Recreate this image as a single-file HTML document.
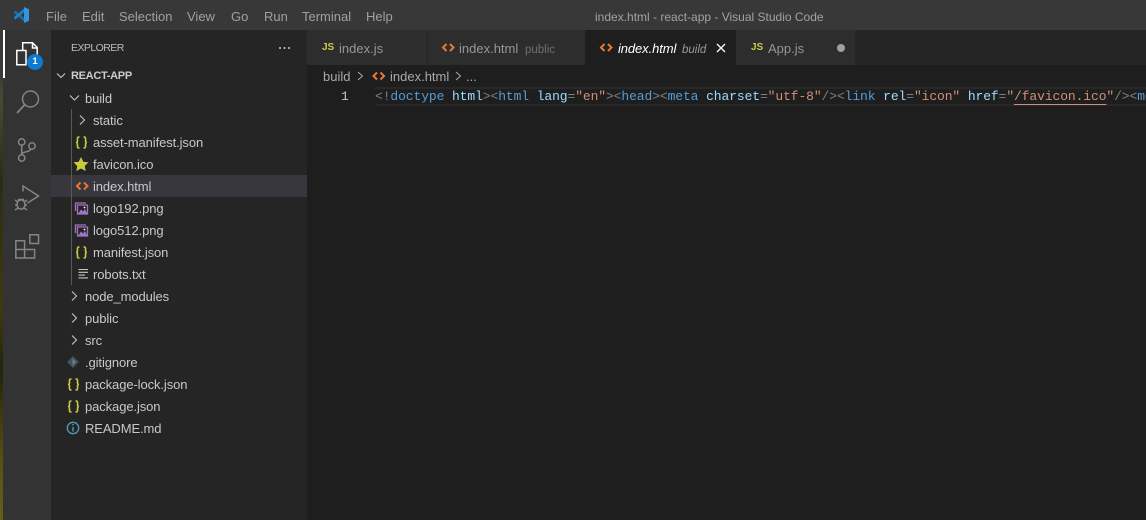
<!DOCTYPE html>
<html><head><meta charset="utf-8"><style>
html,body{margin:0;padding:0;width:1146px;height:520px;overflow:hidden;background:#1e1e1e}
*{box-sizing:border-box}
.a{position:absolute}
.t{position:absolute;margin-top:1px;white-space:pre;font-family:"Liberation Sans",sans-serif;font-size:13px;line-height:22px;height:22px;color:#cccccc}
.m{color:#a0a0a0;top:5px}
.f{color:#c8c8c8;letter-spacing:-.1px}
svg{position:absolute;overflow:visible}
.code{position:absolute;left:375px;top:88px;white-space:pre;font-family:"Liberation Mono",monospace;font-size:13px;letter-spacing:-.105px;line-height:18px;color:#808080}
.b{color:#569cd6}.n{color:#9cdcfe}.s{color:#ce9178}.g{color:#808080}
</style></head><body>
<div class="a" style="left:0;top:0;width:1146px;height:30px;background:#383838"></div>
<div class="a" style="left:0;top:30px;width:3px;height:490px;background:linear-gradient(180deg,#3a3a3a 0,#3a3a3a 45px,#4a4a30 70px,#2c2c10 150px,#3d3a10 280px,#242408 340px,#5a5514 440px,#6a6418 520px)"></div>
<div class="a" style="left:3px;top:30px;width:48px;height:490px;background:#333333"></div>
<div class="a" style="left:3px;top:30px;width:2px;height:48px;background:#ffffff"></div>
<div class="a" style="left:51px;top:30px;width:256px;height:490px;background:#252526"></div>
<div class="a" style="left:307px;top:30px;width:839px;height:35px;background:#252526"></div>

<!-- logo -->
<svg style="left:0;top:0" width="40" height="30" viewBox="0 0 40 30" fill="none">
<path d="M14.500 11.500 25 20.500" stroke="#1b6fb0" stroke-width="2.600"/>
<path d="M14.500 18.500 25 9.500" stroke="#2083c9" stroke-width="2.600"/>
<path d="M24 7 29 9.300V20.700L24 23Z" fill="#2f97e0"/>
</svg>

<div class="t m" style="left:46px">File</div>
<div class="t m" style="left:82px">Edit</div>
<div class="t m" style="left:119px">Selection</div>
<div class="t m" style="left:187px">View</div>
<div class="t m" style="left:231px">Go</div>
<div class="t m" style="left:264px">Run</div>
<div class="t m" style="left:302px">Terminal</div>
<div class="t m" style="left:366px">Help</div>
<div class="t" style="left:595px;top:5px;color:#a2a2a2;font-size:12px">index.html - react-app - Visual Studio Code</div>

<!-- activity icons -->
<svg style="left:0;top:0" width="51" height="280" viewBox="0 0 51 280" fill="none">
<g stroke="#ffffff" stroke-width="1.5">
<path d="M22.700 50V42.800H32.500L37.200 47.500V60H30"/>
<path d="M32.500 43V48H37"/>
<path d="M16.800 50.500H26V64.800H16.800Z"/>
</g>
<circle cx="35" cy="62" r="8" fill="#0e7ad0"/>
<g stroke="#858585" stroke-width="1.5">
<circle cx="30.500" cy="99" r="8"/>
<path d="M24.500 105 17 113" stroke-width="1.700"/>
<circle cx="21.700" cy="142" r="3.200"/><circle cx="32" cy="146" r="3.200"/><circle cx="21.700" cy="158" r="3.200"/>
<path d="M21.700 145.500V154.500M21.800 154C23 151 29 153 31 149"/>
<path d="M23 191.500V186L38.500 196 27.500 203"/>
<ellipse cx="21" cy="204.500" rx="4" ry="4.600"/>
<path d="M15 200 18 202M27 200 24 202M15 205H17M27 205H25M15 210 18 208M27 210 24 208M18 199.500H24"/>
<path d="M15.800 240.800H24.600V258H15.800ZM15.800 249.500H34.600V258H24.600"/>
<path d="M29.800 234.800H38.500V243.500H29.800Z"/>
</g>
</svg>
<div class="t" style="left:30px;top:50px;width:10px;text-align:center;font-size:9.500px;font-weight:bold;color:#fff">1</div>

<!-- explorer header -->
<div class="t" style="left:71px;top:36px;font-size:10.500px;letter-spacing:-.55px;color:#bbbbbb">EXPLORER</div>
<svg style="left:278px;top:46px" width="14" height="4"><circle cx="2" cy="2" r="1" fill="#ccc"/><circle cx="6.500" cy="2" r="1" fill="#ccc"/><circle cx="11" cy="2" r="1" fill="#ccc"/></svg>

<div class="a" style="left:51px;top:175px;width:256px;height:22px;background:#37373d"></div>
<div class="a" style="left:71px;top:109px;width:1px;height:176px;background:#585858"></div>

<!-- tree -->
<div class="t" style="left:71px;top:64px;font-size:11px;font-weight:bold;letter-spacing:-.3px;color:#cccccc">REACT-APP</div>
<div class="t f" style="left:85px;top:87px">build</div>
<div class="t f" style="left:93px;top:109px">static</div>
<div class="t f" style="left:93px;top:131px">asset-manifest.json</div>
<div class="t f" style="left:93px;top:153px">favicon.ico</div>
<div class="t f" style="left:93px;top:175px">index.html</div>
<div class="t f" style="left:93px;top:197px">logo192.png</div>
<div class="t f" style="left:93px;top:219px">logo512.png</div>
<div class="t f" style="left:93px;top:241px">manifest.json</div>
<div class="t f" style="left:93px;top:263px">robots.txt</div>
<div class="t f" style="left:85px;top:285px">node_modules</div>
<div class="t f" style="left:85px;top:307px">public</div>
<div class="t f" style="left:85px;top:329px">src</div>
<div class="t f" style="left:85px;top:351px">.gitignore</div>
<div class="t f" style="left:85px;top:373px">package-lock.json</div>
<div class="t f" style="left:85px;top:395px">package.json</div>
<div class="t f" style="left:85px;top:417px">README.md</div>

<svg style="left:0;top:0" width="120" height="440" viewBox="0 0 120 440" fill="none">
<g stroke="#c5c5c5" stroke-width="1.100">
<path d="M57 73.500 61 77.500 65 73.500"/>
<path d="M70 95.500 74.500 100 79 95.500"/>
<path d="M80 115.500 84.500 120 80 124.500"/>
<path d="M72 291.500 76.500 296 72 300.500"/>
<path d="M72 313.500 76.500 318 72 322.500"/>
<path d="M72 335.500 76.500 340 72 344.500"/>
</g>
<g stroke="#cbcb41" stroke-width="1.600">
<path d="M79.500 137H78.500C77 137 77.500 140.500 77.500 141C77.500 142 76.500 142.500 76 142.500C76.500 142.500 77.500 143 77.500 144C77.500 144.500 77 148 78.500 148H79.500M83.500 137H84.500C86 137 85.500 140.500 85.500 141C85.500 142 86.500 142.500 87 142.500C86.500 142.500 85.500 143 85.500 144C85.500 144.500 86 148 84.500 148H83.500"/>
<path d="M79.500 247H78.500C77 247 77.500 250.500 77.500 251C77.500 252 76.500 252.500 76 252.500C76.500 252.500 77.500 253 77.500 254C77.500 254.500 77 258 78.500 258H79.500M83.500 247H84.500C86 247 85.500 250.500 85.500 251C85.500 252 86.500 252.500 87 252.500C86.500 252.500 85.500 253 85.500 254C85.500 254.500 86 258 84.500 258H83.500"/>
<path d="M71.500 379H70.500C69 379 69.500 382.500 69.500 383C69.500 384 68.500 384.500 68 384.500C68.500 384.500 69.500 385 69.500 386C69.500 386.500 69 390 70.500 390H71.500M75.500 379H76.500C78 379 77.500 382.500 77.500 383C77.500 384 78.500 384.500 79 384.500C78.500 384.500 77.500 385 77.500 386C77.500 386.500 78 390 76.500 390H75.500"/>
<path d="M71.500 401H70.500C69 401 69.500 404.500 69.500 405C69.500 406 68.500 406.500 68 406.500C68.500 406.500 69.500 407 69.500 408C69.500 408.500 69 412 70.500 412H71.500M75.500 401H76.500C78 401 77.500 404.500 77.500 405C77.500 406 78.500 406.500 79 406.500C78.500 406.500 77.500 407 77.500 408C77.500 408.500 78 412 76.500 412H75.500"/>
</g>
<path d="M80.500 182.500 77 186 80.500 189.500M84 182.500 87.500 186 84 189.500" stroke="#e37933" stroke-width="2"/>
<path d="M81 157 83.300 161.800 88.500 162.400 84.700 166 85.700 171 81 168.500 76.300 171 77.300 166 73.500 162.400 78.700 161.800Z" fill="#cbcb41"/>
<g stroke="#a074c4" stroke-width="1.300">
<path d="M75.500 211V203H86"/>
<path d="M77.500 205H87.500V214H77.500Z"/>
<path d="M75.500 233V225H86"/>
<path d="M77.500 227H87.500V236H77.500Z"/>
</g>
<path d="M78 214 81 209.500 83 211.500 85 209 87.500 214Z" fill="#a074c4"/>
<path d="M78 236 81 231.500 83 233.500 85 231 87.500 236Z" fill="#a074c4"/>
<circle cx="84.500" cy="207.500" r=".9" fill="#fff"/><circle cx="84.500" cy="229.500" r=".9" fill="#fff"/>
<path d="M78.500 270H88M78.500 272.800H88M78.500 275.600H85M78.500 278.400H88" stroke="#c5c5c5" stroke-width="1.100" transform="translate(0,-.5)"/>
<path d="M73 356 79 362 73 368 67 362Z" fill="#41535b"/>
<path d="M72.500 358.500 76 362 72.500 365.500" fill="#6d8086"/>
<circle cx="73" cy="428" r="5.700" stroke="#519aba" stroke-width="1.300"/>
<path d="M73 427V431.500M73 424V425.500" stroke="#519aba" stroke-width="1.400"/>
</svg>

<!-- tabs -->
<div class="a" style="left:307px;top:30px;width:120px;height:35px;background:#2d2d2d"></div>
<div class="a" style="left:427px;top:30px;width:158px;height:35px;background:#2d2d2d;border-left:1px solid #252526"></div>
<div class="a" style="left:585px;top:30px;width:151px;height:35px;background:#1e1e1e"></div>
<div class="a" style="left:736px;top:30px;width:119px;height:35px;background:#2d2d2d"></div>

<div class="t" style="left:322px;top:36px;font-size:10px;font-weight:bold;color:#cbcb41;width:14px">JS</div>
<div class="t" style="left:339px;top:37px;color:#969696">index.js</div>
<div class="t" style="left:459px;top:37px;color:#969696">index.html</div>
<div class="t" style="left:525px;top:38px;font-size:11.500px;color:#6f6f6f">public</div>
<div class="t" style="left:618px;top:37px;color:#ffffff;font-style:italic;letter-spacing:-.1px">index.html</div>
<div class="t" style="left:682px;top:38px;font-size:11.500px;font-style:italic;color:#9a9a9a">build</div>
<div class="t" style="left:751px;top:36px;font-size:10px;font-weight:bold;color:#cbcb41;width:14px">JS</div>
<div class="t" style="left:768px;top:37px;color:#969696">App.js</div>

<svg style="left:0;top:0" width="860" height="90" viewBox="0 0 860 90" fill="none">
<g stroke="#e37933" stroke-width="2">
<path d="M446.500 44 443 47.500 446.500 51M450 44 453.500 47.500 450 51"/>
<path d="M604.500 44 601 47.500 604.500 51M608 44 611.500 47.500 608 51"/>
<path d="M377 72.500 373.500 76 377 79.500M380.500 72.500 384 76 380.500 79.500"/>
</g>
<path d="M717 44 725 52M725 44 717 52" stroke="#ffffff" stroke-width="1.300"/>
<circle cx="841" cy="48" r="4" fill="#a0a0a0"/>
<path d="M358 72 362.500 76 358 80M456 72 460.500 76 456 80" stroke="#a8a8a8" stroke-width="1"/>
</svg>

<!-- breadcrumb -->
<div class="t" style="left:323px;top:65px;color:#a9a9a9">build</div>
<div class="t" style="left:390px;top:65px;color:#a9a9a9">index.html</div>
<div class="t" style="left:466px;top:65px;color:#a9a9a9">...</div>

<!-- editor -->
<div class="a" style="left:375px;top:87px;width:771px;height:19px;border-top:2px solid #282828;border-bottom:2px solid #282828"></div>
<div class="t" style="left:341px;top:88px;margin-top:0;height:18px;line-height:18px;font-family:'Liberation Mono',monospace;font-size:13px;color:#c6c6c6">1</div>
<div class="code"><span class="g">&lt;!</span><span class="b">doctype</span> <span class="n">html</span><span class="g">&gt;&lt;</span><span class="b">html</span> <span class="n">lang</span>=<span class="s">"en"</span><span class="g">&gt;&lt;</span><span class="b">head</span><span class="g">&gt;&lt;</span><span class="b">meta</span> <span class="n">charset</span>=<span class="s">"utf-8"</span><span class="g">/&gt;&lt;</span><span class="b">link</span> <span class="n">rel</span>=<span class="s">"icon"</span> <span class="n">href</span>=<span class="s">"<span style="text-decoration:underline;text-underline-offset:4px">/favicon.ico</span>"</span><span class="g">/&gt;&lt;</span><span class="b">meta</span></div>
</body></html>
